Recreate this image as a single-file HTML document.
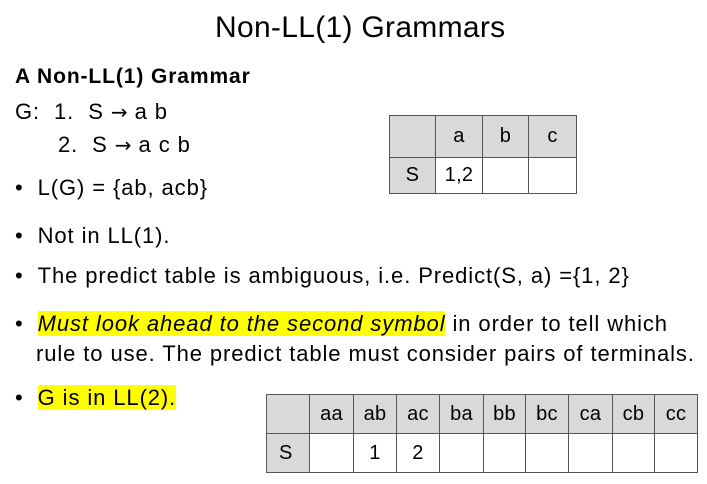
<!DOCTYPE html>
<html><head><style>
body{margin:0;width:707px;height:484px;background:#fff;position:relative;overflow:hidden;font-family:"Liberation Sans",sans-serif;color:#000}
.t{position:absolute;white-space:nowrap;font-size:22px;letter-spacing:0.9px;line-height:26px}
.hl{background:#ffff00}
.ar{font-family:"DejaVu Sans",sans-serif;font-size:20px;letter-spacing:0}
table{position:absolute;border-collapse:collapse;table-layout:fixed;font-size:20px;letter-spacing:0.3px}
td{border:1.5px solid #555;text-align:center;padding:0}
.g{background:#d9d9d9}
</style></head><body>
<div class="t" style="left:215px;top:11px;font-size:30px;line-height:34px;letter-spacing:0.3px">Non-LL(1) Grammars</div>
<div class="t" style="left:15px;top:64px;font-weight:bold;font-size:21px">A Non-LL(1) Grammar</div>
<div class="t" style="left:15px;top:99px">G:&nbsp;&nbsp;1.&nbsp;&nbsp;S <span class="ar">→</span> a b</div>
<div class="t" style="left:58px;top:132px">2.&nbsp;&nbsp;S <span class="ar">→</span> a c b</div>
<div class="t" style="left:15px;top:175px">•&nbsp;&nbsp;L(G) = {ab, acb}</div>
<div class="t" style="left:15px;top:223px">•&nbsp;&nbsp;Not in LL(1).</div>
<div class="t" style="left:15px;top:263px">•&nbsp;&nbsp;The predict table is ambiguous, i.e. Predict(S, a) ={1, 2}</div>
<div class="t" style="left:15px;top:311px">•&nbsp;&nbsp;<span class="hl"><i>Must look ahead to the second symbol</i></span> in order to tell which</div>
<div class="t" style="left:36px;top:341px">rule to use. The predict table must consider pairs of terminals.</div>
<div class="t" style="left:15px;top:385px">•&nbsp;&nbsp;<span class="hl">G is in LL(2).</span></div>
<table style="left:389px;top:115px;width:187px;height:79px">
<colgroup><col style="width:46px"><col style="width:47px"><col style="width:46px"><col style="width:48px"></colgroup>
<tr style="height:42px"><td class="g"></td><td class="g">a</td><td class="g">b</td><td class="g">c</td></tr>
<tr><td class="g">S</td><td>1,2</td><td></td><td></td></tr>
</table>
<table style="left:266px;top:394px;width:431px;height:79px">
<colgroup><col style="width:43px"><col style="width:44px"><col style="width:43px"><col style="width:43px"><col style="width:44px"><col style="width:42px"><col style="width:43px"><col style="width:44px"><col style="width:42px"><col style="width:43px"></colgroup>
<tr style="height:39px"><td class="g"></td><td class="g">aa</td><td class="g">ab</td><td class="g">ac</td><td class="g">ba</td><td class="g">bb</td><td class="g">bc</td><td class="g">ca</td><td class="g">cb</td><td class="g">cc</td></tr>
<tr><td class="g" style="text-align:left;padding-left:12px">S</td><td></td><td>1</td><td>2</td><td></td><td></td><td></td><td></td><td></td><td></td></tr>
</table>
</body></html>
